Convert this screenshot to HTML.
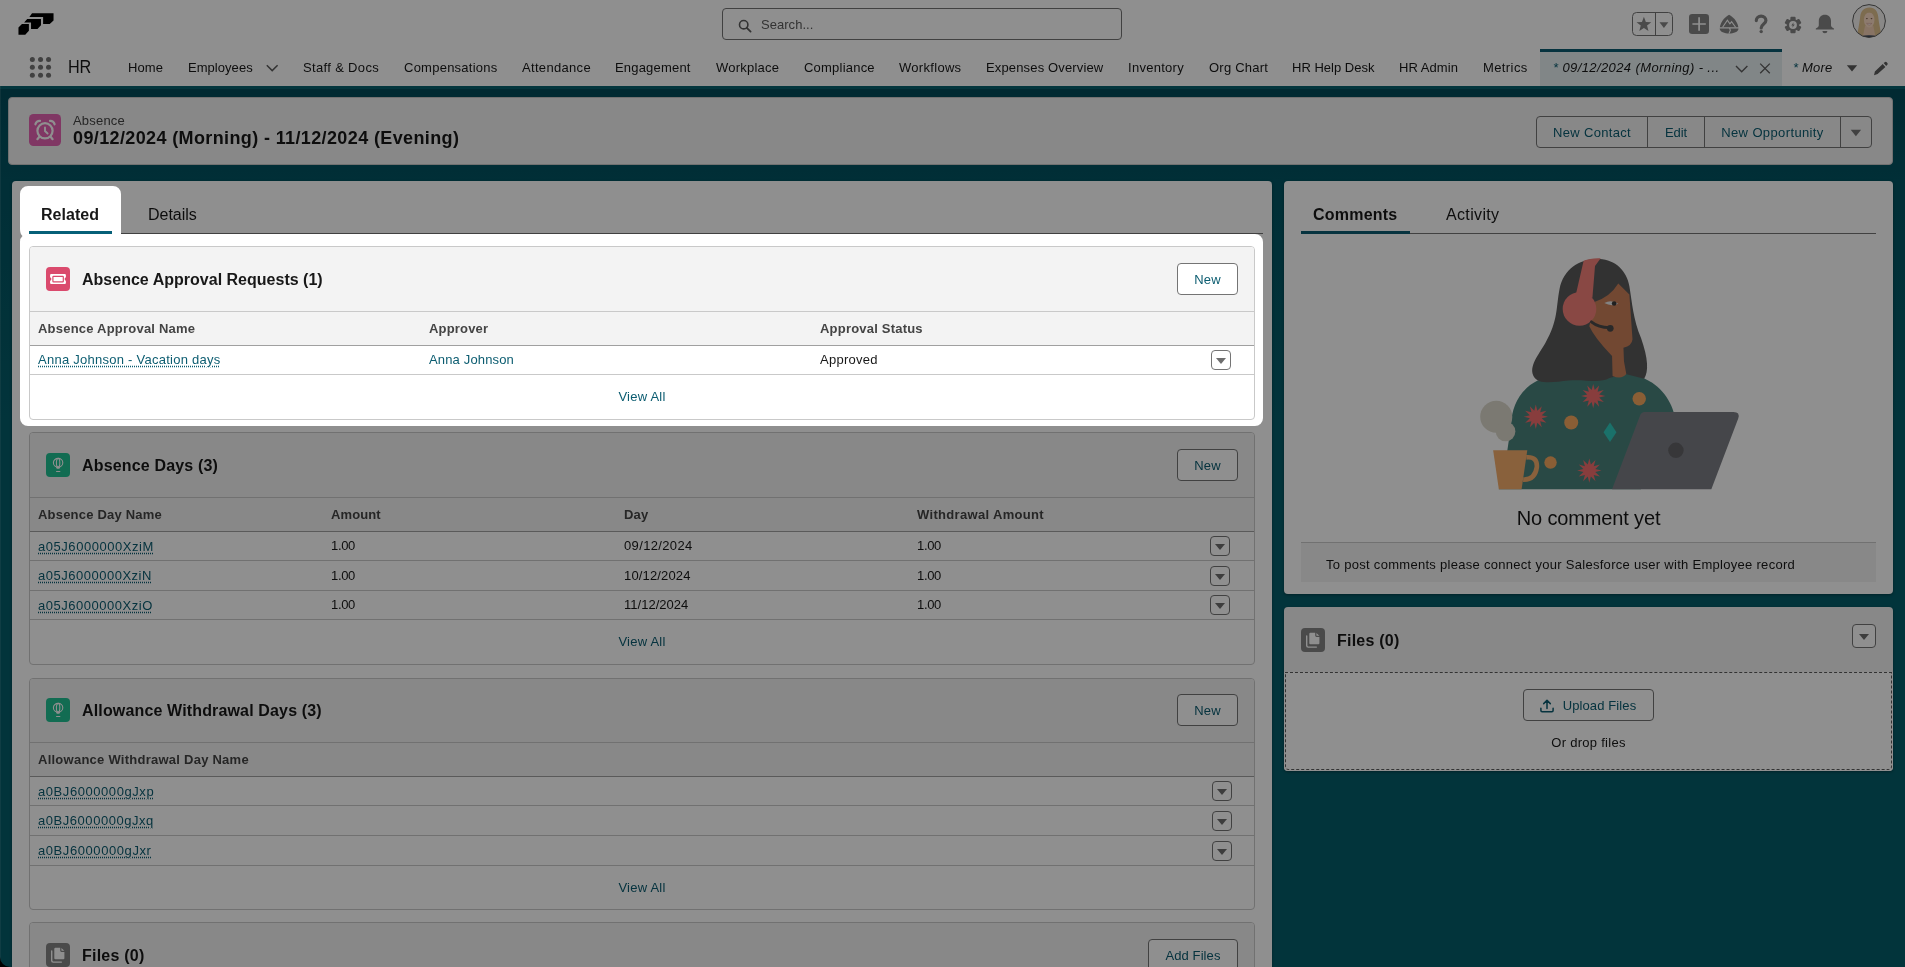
<!DOCTYPE html>
<html lang="en">
<head>
<meta charset="utf-8">
<title>09/12/2024 (Morning) - 11/12/2024 (Evening) | Absence | Salesforce</title>
<style>
*{box-sizing:border-box;margin:0;padding:0}
html,body{width:1905px;height:967px;overflow:hidden}
body{position:relative;background:linear-gradient(to bottom,#024b59 86px,#025462 180px,#055d6a 420px);font-family:"Liberation Sans",Arial,sans-serif;font-size:13px;color:#181818}
.a{position:absolute}
.t{position:absolute;white-space:nowrap;line-height:16px}
.lk{color:#0b5c70}
.b{font-weight:bold}
/* global header */
#gh{left:0;top:0;width:1905px;height:48px;background:#fff}
#nav{left:0;top:48px;width:1905px;height:38px;background:#fff}
.nv{top:12px;font-size:13px;color:#181818}
/* cards */
.card{background:#fff;border-radius:4px;box-shadow:0 1px 3px rgba(0,0,0,.35)}
.rl{background:#fff;border:1px solid #c9c9c9;border-radius:4px;overflow:hidden}
.rlh{left:0;top:0;width:100%;height:64px;background:#f3f3f3;border-bottom:1px solid #c9c9c9}
.rlt{left:52px;font-size:16px;font-weight:bold;line-height:20px;color:#181818}
.ico{border-radius:4px;width:24px;height:24px}
.btn{position:absolute;background:#fff;border:1px solid #747474;border-radius:4px;color:#0b5c70;font-size:13px;line-height:32px;text-align:center;height:32px;white-space:nowrap}
.th{left:0;width:100%;height:34px;background:#f3f3f3;border-bottom:1px solid #a0a0a0;top:64px}
.thc{top:9px;font-weight:bold;color:#444;font-size:13px}
.row{left:0;width:100%;border-bottom:1px solid #c9c9c9;background:#fff}
.ul{text-decoration:underline dotted;text-underline-offset:2px}
.dd{position:absolute;width:20px;height:20px;border:1px solid #747474;border-radius:4px;background:#fff}
.dd:after{content:"";position:absolute;left:4px;top:7px;border-left:5px solid transparent;border-right:5px solid transparent;border-top:6px solid #6e6e6e}
.dd24{width:24px;height:24px}
.dd24:after{left:6px;top:9px}
.va{left:0;width:100%;text-align:center;color:#0b5c70;font-size:13px;line-height:16px}
</style>
</head>
<body>
<div id="wrap" style="position:absolute;left:0;top:0;width:1905px;height:967px;will-change:transform">

<!-- ===== GLOBAL HEADER ===== -->
<div id="gh" class="a">
  <svg class="a" style="left:14px;top:8px" width="44" height="32" viewBox="0 0 1330 967">
    <path fill="#000" d="M545 160H1195V375L1080 480H880V270H465ZM400 335H815V525L710 635H515V440H305ZM240 485H450V690L340 805H135V590Z"/>
  </svg>
  <div class="a" style="left:722px;top:8px;width:400px;height:32px;border:1px solid #747474;border-radius:4px;background:#fff"></div>
  <svg class="a" style="left:738px;top:19px" width="14" height="14" viewBox="0 0 14 14"><circle cx="5.7" cy="5.7" r="4.2" fill="none" stroke="#5c5c5c" stroke-width="1.6"/><path d="M8.8 8.8 L12.6 12.6" stroke="#5c5c5c" stroke-width="1.8" stroke-linecap="round"/></svg>
  <div class="t" style="left:761px;top:17px;color:#5c5c5c;font-size:13px;letter-spacing:0.041px">Search...</div>
  <!-- header actions -->
  <svg class="a" style="left:1620px;top:0" width="285" height="48" viewBox="1620 0 285 48">
    <rect x="1632.5" y="12.5" width="40" height="23" rx="4" fill="#fff" stroke="#747474"/>
    <path d="M1655.5 12.5V35.5" stroke="#747474"/>
    <polygon fill="#848484" points="1643.90,16.80 1645.84,21.93 1651.32,22.19 1647.04,25.62 1648.48,30.91 1643.90,27.90 1639.32,30.91 1640.76,25.62 1636.48,22.19 1641.96,21.93"/>
    <polygon fill="#848484" points="1659.5,22.3 1668.3,22.3 1663.9,27.9"/>
    <rect x="1689" y="14" width="20" height="20" rx="3.2" fill="#848484"/>
    <path d="M1692.4 24H1705.8M1699.1 17.3V30.7" stroke="#fff" stroke-width="1.7"/>
    <path fill="#848484" d="M1729.1 14.8C1734.5 17.5 1738.6 24 1738.5 28.8C1738.4 32 1733.5 33.5 1729.1 33.5C1724.7 33.5 1719.8 32 1719.7 28.8C1719.6 24 1723.7 17.5 1729.1 14.8Z"/>
    <path d="M1722.6 27.2L1727.4 20.2L1729.9 23.8L1731.6 21.6L1735.6 27.2" fill="none" stroke="#fff" stroke-width="1.1"/>
    <path d="M1719 27.9H1739.2M1729.6 28L1730.3 30.4L1728.9 33.6" fill="none" stroke="#fff" stroke-width="1.1"/>
    <path d="M1756.3 20.6C1756.3 17.8 1758.4 16.2 1761.1 16.2C1763.9 16.2 1765.9 17.9 1765.9 20.4C1765.9 24 1761.2 23.9 1761.2 28" fill="none" stroke="#848484" stroke-width="3.2" stroke-linecap="round"/>
    <circle cx="1761.2" cy="31.6" r="1.7" fill="#848484"/>
    <polygon fill="#848484" stroke="#848484" stroke-width="1.7" stroke-linejoin="round" points="1791.10,20.16 1791.28,17.49 1794.72,17.49 1794.90,20.16 1796.24,20.93 1798.64,19.76 1800.36,22.73 1798.14,24.23 1798.14,25.77 1800.36,27.27 1798.64,30.24 1796.24,29.07 1794.90,29.84 1794.72,32.51 1791.28,32.51 1791.10,29.84 1789.76,29.07 1787.36,30.24 1785.64,27.27 1787.86,25.77 1787.86,24.23 1785.64,22.73 1787.36,19.76 1789.76,20.93"/>
    <circle cx="1793" cy="25" r="3.9" fill="#fff"/>
    <path fill="#848484" d="M1793.6 22.3L1791.3 25.4H1792.8L1792.3 27.8L1794.8 24.5H1793.2Z"/>
    <path fill="#848484" d="M1824.9 14.8C1828.6 14.8 1831 17.5 1831 21V25.3C1831 26.8 1832.2 27.6 1833.6 28.2C1834.4 28.6 1834.2 29.6 1833.4 29.6H1816.4C1815.6 29.6 1815.4 28.6 1816.2 28.2C1817.6 27.6 1818.8 26.8 1818.8 25.3V21C1818.8 17.5 1821.2 14.8 1824.9 14.8Z"/>
    <path fill="#848484" d="M1822.4 31H1827.4A2.5 2.3 0 0 1 1822.4 31Z"/>
    <!-- avatar -->
    <clipPath id="avc"><circle cx="1869" cy="21" r="16.2"/></clipPath>
    <g clip-path="url(#avc)">
      <rect x="1852" y="4" width="34" height="34" fill="#f4f3f1"/>
      <path fill="#dfc08e" d="M1869.3 7.6C1874.6 7.4 1877.6 11.2 1878.2 16.6C1878.9 23.5 1880.4 29 1881.8 38H1856.8C1858.2 29 1859.4 23.5 1860.2 16.6C1860.8 11.2 1864 7.7 1869.3 7.6Z"/>
      <path fill="#f3cfb4" d="M1865 26H1873.4L1875.6 38H1862.6Z"/>
      <ellipse cx="1869.2" cy="19.8" rx="5.3" ry="7.6" fill="#fbdcc4"/>
      <path fill="#dfc08e" d="M1863.2 17C1863.6 12 1866 10.2 1869.4 10.2C1872.6 10.2 1875 12.2 1875.3 17C1873.6 14 1871.8 12.6 1869.2 12.6C1866.6 12.6 1865 14 1863.2 17Z"/>
      <ellipse cx="1866.9" cy="18.6" rx="0.9" ry="0.6" fill="#7a5a48"/><ellipse cx="1871.5" cy="18.6" rx="0.9" ry="0.6" fill="#7a5a48"/>
      <path d="M1866.6 23.4Q1869.2 26.6 1871.8 23.4Z" fill="#fff" stroke="#c98a7a" stroke-width="0.5"/>
      <path fill="#3d4a5c" d="M1860 36.5Q1869 34 1878 36.5V38H1860Z"/>
    </g>
    <circle cx="1869" cy="21" r="16.4" fill="none" stroke="#5c5c5c" stroke-width="1"/>
  </svg>
</div>

<!-- ===== NAV BAR ===== -->
<div id="nav" class="a">
  <svg class="a" style="left:28px;top:7px" width="26" height="26" viewBox="28 55 26 26"><g fill="#747474"><circle cx="32.35" cy="59.40" r="2.5"/><circle cx="40.55" cy="59.40" r="2.5"/><circle cx="48.55" cy="59.40" r="2.5"/><circle cx="32.35" cy="67.30" r="2.5"/><circle cx="40.55" cy="67.30" r="2.5"/><circle cx="48.55" cy="67.30" r="2.5"/><circle cx="32.35" cy="75.20" r="2.5"/><circle cx="40.55" cy="75.20" r="2.5"/><circle cx="48.55" cy="75.20" r="2.5"/></g></svg>
  <div class="t" style="left:68px;top:8px;font-size:18px;line-height:22px;color:#181818;transform:scaleX(.9);transform-origin:0 50%;letter-spacing:-0.1px">HR</div>
  <div class="t nv" style="left:128px;letter-spacing:0.078px">Home</div>
  <div class="t nv" style="left:188px;letter-spacing:0.043px">Employees</div>
  <div class="t nv" style="left:303px;letter-spacing:0.34px">Staff &amp; Docs</div>
  <div class="t nv" style="left:404px;letter-spacing:0.244px">Compensations</div>
  <div class="t nv" style="left:522px;letter-spacing:0.322px">Attendance</div>
  <div class="t nv" style="left:615px;letter-spacing:0.187px">Engagement</div>
  <div class="t nv" style="left:716px;letter-spacing:0.235px">Workplace</div>
  <div class="t nv" style="left:804px;letter-spacing:0.214px">Compliance</div>
  <div class="t nv" style="left:899px;letter-spacing:0.298px">Workflows</div>
  <div class="t nv" style="left:986px;letter-spacing:0.148px">Expenses Overview</div>
  <div class="t nv" style="left:1128px;letter-spacing:0.28px">Inventory</div>
  <div class="t nv" style="left:1209px;letter-spacing:0.236px">Org Chart</div>
  <div class="t nv" style="left:1292px;letter-spacing:0.003px">HR Help Desk</div>
  <div class="t nv" style="left:1399px;letter-spacing:0.059px">HR Admin</div>
  <div class="t nv" style="left:1483px;letter-spacing:0.401px">Metrics</div>
  <div class="a" style="left:1540px;top:1px;width:242px;height:37px;background:#e6eff1;border-top:3px solid #0b5c70"></div>
  <svg class="a" style="left:0;top:0" width="1905" height="38" viewBox="0 48 1905 38">
    <path d="M266.8 65.2L272.2 70.6L277.6 65.2" fill="none" stroke="#5c5c5c" stroke-width="1.5"/>
    <path d="M1736 66L1741.7 71.7L1747.4 66" fill="none" stroke="#5c5c5c" stroke-width="1.4"/>
    <path d="M1760.2 63.6L1769.8 73.2M1769.8 63.6L1760.2 73.2" fill="none" stroke="#5c5c5c" stroke-width="1.3"/>
    <polygon fill="#5c5c5c" points="1846.8,65.2 1857.2,65.2 1852,71.6"/>
    <path fill="#5c5c5c" d="M1883.6 63.1L1885.2 61.9Q1886 61.5 1886.7 62.2L1887.5 63.2Q1888 63.9 1887.5 64.6L1886.2 66ZM1882.7 64L1885.4 66.9L1877.6 74.1L1874 75.2L1874.9 71.5Z"/>
  </svg>
  <div class="t nv" style="left:1553px;font-style:italic;letter-spacing:0.394px"><span style="color:#0b5c70">*</span> 09/12/2024 (Morning) - ...</div>
  <div class="t nv" style="left:1793px;font-style:italic;letter-spacing:0.184px"><span style="color:#0b5c70">*</span> More</div>
</div>

<div class="a" style="left:0;top:86px;width:1905px;height:3px;background:#07606e"></div>
<div class="a" style="left:0;top:86px;width:1px;height:881px;background:rgba(255,255,255,.1)"></div>
<!-- ===== RECORD HEADER ===== -->
<div class="a" style="left:8px;top:97px;width:1885px;height:68px;background:#f3f3f3;border-radius:4px;border:1px solid #c9c9c9">
  <svg class="a" style="left:20px;top:16px" width="32" height="32" viewBox="0 0 32 32"><rect width="32" height="32" rx="4.5" fill="#e462b2"/>
    <g fill="none" stroke="#fff" stroke-width="2.2" stroke-linecap="round"><circle cx="16" cy="16.8" r="7.6"/><path d="M6.4 10.3A4.2 4.2 0 0 1 11 6.9M21 6.9A4.2 4.2 0 0 1 25.6 10.3M10.2 23L8.4 25.2M21.8 23L23.6 25.2"/><path d="M16 13.4V17L18.6 19.5" stroke-width="1.9"/></g></svg>
  <div class="t" style="left:64px;top:15px;font-size:13px;color:#444;letter-spacing:0.187px">Absence</div>
  <div class="t b" style="left:64px;top:29px;font-size:18px;line-height:22px;color:#181818;letter-spacing:0.375px">09/12/2024 (Morning) - 11/12/2024 (Evening)</div>
  <div class="btn" style="left:1527px;top:18px;background:transparent;width:112px;border-radius:4px 0 0 4px;letter-spacing:0.325px">New Contact</div>
  <div class="btn" style="left:1638px;top:18px;background:transparent;width:58px;border-radius:0;letter-spacing:-0.052px">Edit</div>
  <div class="btn" style="left:1695px;top:18px;background:transparent;width:137px;border-radius:0;letter-spacing:0.378px">New Opportunity</div>
  <div class="btn" style="left:1831px;top:18px;background:transparent;width:32px;border-radius:0 4px 4px 0"></div>
  <svg class="a" style="left:1841px;top:31px" width="12" height="8" viewBox="0 0 12 8"><polygon fill="#747474" points="0.7,0.8 11.1,0.8 5.9,7.2"/></svg>
</div>

<!-- ===== LEFT MAIN CARD ===== -->
<div id="main" class="a card" style="left:12px;top:181px;width:1260px;height:800px;border-radius:4px 4px 0 0">
  <div class="a" style="left:9px;top:52px;width:1242px;height:1px;background:#747474"></div>
  <div class="a" style="left:8px;top:52px;width:101px;height:1px;background:#fff"></div>
  <div class="t b" style="left:29px;top:24px;font-size:16px;line-height:20px;color:#181818;letter-spacing:0.029px">Related</div>
  <div class="a" style="left:17px;top:50px;width:83px;height:3px;background:#066078"></div>
  <div class="t" style="left:136px;top:24px;font-size:16px;line-height:20px;color:#181818;letter-spacing:-0.029px">Details</div>

  <!-- card 1 : Absence Approval Requests -->
  <div class="a rl" style="left:17px;top:65px;width:1226px;height:174px">
    <div class="a rlh" style="height:65px">
      <svg class="a" style="left:16px;top:20px" width="24" height="24" viewBox="0 0 24 24"><rect width="24" height="24" rx="4" fill="#da4a6d"/>
        <path fill="#fff" d="M5.2 7H18.8Q19.9 7 19.9 8.1V10.2Q18.6 10.8 18.6 12Q18.6 13.3 19.9 13.9V16Q19.9 17.1 18.8 17.1H5.2Q4.1 17.1 4.1 16V13.9Q5.4 13.3 5.4 12Q5.4 10.8 4.1 10.2V8.1Q4.1 7 5.2 7Z"/>
        <rect x="6.9" y="9.3" width="10.4" height="5.5" rx="0.6" fill="none" stroke="#da4a6d" stroke-width="1.2"/></svg>
      <div class="t rlt" style="top:23px;letter-spacing:0.012px">Absence Approval Requests (1)</div>
      <div class="btn" style="left:1147px;top:16px;width:61px;letter-spacing:0.161px">New</div>
    </div>
    <div class="a th" style="top:65px;height:34px">
      <div class="t thc" style="left:8px;letter-spacing:0.22px">Absence Approval Name</div>
      <div class="t thc" style="left:399px;letter-spacing:0.175px">Approver</div>
      <div class="t thc" style="left:790px;letter-spacing:0.207px">Approval Status</div>
    </div>
    <div class="a row" style="top:99px;height:29px">
      <div class="t lk ul" style="left:8px;top:6px;letter-spacing:0.258px">Anna Johnson - Vacation days</div>
      <div class="t lk" style="left:399px;top:6px;letter-spacing:0.156px">Anna Johnson</div>
      <div class="t" style="left:790px;top:6px;letter-spacing:0.268px">Approved</div>
      <div class="dd" style="left:1181px;top:4px"></div>
    </div>
    <div class="t va" style="top:142px;letter-spacing:0.238px">View All</div>
  </div>

  <!-- card 2 : Absence Days -->
  <div class="a rl" style="left:17px;top:251px;width:1226px;height:233px">
    <div class="a rlh" style="height:65px">
      <svg class="a" style="left:16px;top:20px" width="24" height="24" viewBox="0 0 24 24"><rect width="24" height="24" rx="4" fill="#20c092"/>
        <g fill="none" stroke="#fff" stroke-width="1.1"><ellipse cx="12.1" cy="9.7" rx="4.7" ry="4.3"/><ellipse cx="12.1" cy="9.7" rx="1.7" ry="4.3"/></g>
        <path fill="#fff" d="M9.9 14.1H14.3L13.4 15.7H10.8ZM10.5 17.9H13.9Q14.4 17.9 14.4 18.5Q14.4 19 13.9 19H10.5Q10 19 10 18.5Q10 17.9 10.5 17.9Z"/></svg>
      <div class="t rlt" style="top:23px;letter-spacing:0.163px">Absence Days (3)</div>
      <div class="btn" style="left:1147px;top:16px;width:61px;letter-spacing:0.161px">New</div>
    </div>
    <div class="a th" style="top:65px;height:34px">
      <div class="t thc" style="left:8px;letter-spacing:0.202px">Absence Day Name</div>
      <div class="t thc" style="left:301px;letter-spacing:0.115px">Amount</div>
      <div class="t thc" style="left:594px;letter-spacing:0.147px">Day</div>
      <div class="t thc" style="left:887px;letter-spacing:0.326px">Withdrawal Amount</div>
    </div>
    <div class="a row" style="top:99px;height:29px">
      <div class="t lk ul" style="left:8px;top:7px;letter-spacing:0.546px">a05J6000000XziM</div>
      <div class="t" style="left:301px;top:6px;letter-spacing:-0.353px">1.00</div>
      <div class="t" style="left:594px;top:6px;letter-spacing:0.352px">09/12/2024</div>
      <div class="t" style="left:887px;top:6px;letter-spacing:-0.353px">1.00</div>
      <div class="dd" style="left:1180px;top:4px"></div>
    </div>
    <div class="a row" style="top:128px;height:30px">
      <div class="t lk ul" style="left:8px;top:7px;letter-spacing:0.51px">a05J6000000XziN</div>
      <div class="t" style="left:301px;top:7px;letter-spacing:-0.353px">1.00</div>
      <div class="t" style="left:594px;top:7px;letter-spacing:0.152px">10/12/2024</div>
      <div class="t" style="left:887px;top:7px;letter-spacing:-0.353px">1.00</div>
      <div class="dd" style="left:1180px;top:5px"></div>
    </div>
    <div class="a row" style="top:158px;height:29px">
      <div class="t lk ul" style="left:8px;top:7px;letter-spacing:0.528px">a05J6000000XziO</div>
      <div class="t" style="left:301px;top:6px;letter-spacing:-0.353px">1.00</div>
      <div class="t" style="left:594px;top:6px;letter-spacing:0.019px">11/12/2024</div>
      <div class="t" style="left:887px;top:6px;letter-spacing:-0.353px">1.00</div>
      <div class="dd" style="left:1180px;top:4px"></div>
    </div>
    <div class="t va" style="top:201px;letter-spacing:0.238px">View All</div>
  </div>

  <!-- card 3 : Allowance Withdrawal Days -->
  <div class="a rl" style="left:17px;top:497px;width:1226px;height:232px">
    <div class="a rlh" style="height:64px">
      <svg class="a" style="left:16px;top:19px" width="24" height="24" viewBox="0 0 24 24"><rect width="24" height="24" rx="4" fill="#20c092"/>
        <g fill="none" stroke="#fff" stroke-width="1.1"><ellipse cx="12.1" cy="9.7" rx="4.7" ry="4.3"/><ellipse cx="12.1" cy="9.7" rx="1.7" ry="4.3"/></g>
        <path fill="#fff" d="M9.9 14.1H14.3L13.4 15.7H10.8ZM10.5 17.9H13.9Q14.4 17.9 14.4 18.5Q14.4 19 13.9 19H10.5Q10 19 10 18.5Q10 17.9 10.5 17.9Z"/></svg>
      <div class="t rlt" style="top:22px;letter-spacing:0.149px">Allowance Withdrawal Days (3)</div>
      <div class="btn" style="left:1147px;top:15px;width:61px;letter-spacing:0.161px">New</div>
    </div>
    <div class="a th" style="top:64px;height:34px">
      <div class="t thc" style="left:8px;letter-spacing:0.251px">Allowance Withdrawal Day Name</div>
    </div>
    <div class="a row" style="top:98px;height:29px">
      <div class="t lk ul" style="left:8px;top:7px;letter-spacing:0.566px">a0BJ6000000gJxp</div>
      <div class="dd" style="left:1182px;top:4px"></div>
    </div>
    <div class="a row" style="top:127px;height:30px">
      <div class="t lk ul" style="left:8px;top:7px;letter-spacing:0.546px">a0BJ6000000gJxq</div>
      <div class="dd" style="left:1182px;top:5px"></div>
    </div>
    <div class="a row" style="top:157px;height:30px">
      <div class="t lk ul" style="left:8px;top:7px;letter-spacing:0.579px">a0BJ6000000gJxr</div>
      <div class="dd" style="left:1182px;top:5px"></div>
    </div>
    <div class="t va" style="top:201px;letter-spacing:0.238px">View All</div>
  </div>

  <!-- card 4 : Files -->
  <div class="a rl" style="left:17px;top:741px;width:1226px;height:100px">
    <div class="a rlh" style="height:78px">
      <svg class="a" style="left:16px;top:20px" width="24" height="24" viewBox="0 0 24 24"><rect width="24" height="24" rx="4" fill="#858585"/>
        <path fill="#fff" d="M9.4 4.8H14.2V7.6Q14.2 8.9 15.5 8.9H18.4V15.2Q18.4 16.3 17.3 16.3H9.4Q8.3 16.3 8.3 15.2V5.9Q8.3 4.8 9.4 4.8ZM15.4 4.9L18.3 7.8H15.9Q15.4 7.8 15.4 7.3Z"/>
        <path fill="none" stroke="#fff" stroke-width="1.4" stroke-linecap="round" d="M5.7 8V17.6Q5.7 19.1 7.2 19.1H15.4"/></svg>
      <div class="t rlt" style="top:23px;letter-spacing:0.226px">Files (0)</div>
      <div class="btn" style="left:1118px;top:16px;width:90px;letter-spacing:0.1px">Add Files</div>
    </div>
  </div>
</div>

<!-- ===== RIGHT COLUMN ===== -->
<div class="a card" style="left:1284px;top:181px;width:609px;height:413px">
  <div class="a" style="left:17px;top:52px;width:575px;height:1px;background:#747474"></div>
  <div class="t b" style="left:29px;top:24px;font-size:16px;line-height:20px;letter-spacing:0.227px">Comments</div>
  <div class="a" style="left:17px;top:50px;width:109px;height:3px;background:#0b5c70"></div>
  <div class="t" style="left:162px;top:24px;font-size:16px;line-height:20px;letter-spacing:0.341px">Activity</div>
  <svg class="a" style="left:176px;top:69px" width="300" height="250" viewBox="0 0 1160 967">
    <!-- steam -->
    <!-- sweater -->
    <path fill="#4a837c" d="M300 505C232 540 200 600 197 680L183 775L150 925H700L830 640C815 570 760 512 700 492L645 470L620 470L588 470L540 480C480 480 400 480 300 505Z"/>
    <circle cx="140" cy="645" r="62" fill="#dcd8cb"/><circle cx="176" cy="702" r="38" fill="#dcd8cb"/>
    <!-- hair -->
    <path fill="#5a5a5a" d="M540 35C470 30 400 70 385 150C370 230 380 270 330 360C300 410 268 450 283 485C298 522 360 512 420 505C480 498 540 518 578 495L640 480L712 498C730 470 728 420 700 340C670 270 665 200 655 140C645 80 600 38 540 35Z"/>
    <!-- face + neck -->
    <path fill="#cc805a" d="M612 130L655 172L667 345Q665 370 632 378L634 430L643 480Q625 502 590 487L588 410Q520 340 500 295L522 200Q580 182 612 130Z"/>
    <!-- eye -->
    <path fill="#e9e9e9" d="M558 205Q585 190 612 208Q585 220 558 205Z"/><circle cx="596" cy="207" r="9" fill="#3a3a3a"/>
    <!-- headset -->
    <path fill="#f4807a" d="M478 42Q505 30 544 32L522 62L512 185H445Z"/>
    <circle cx="462" cy="228" r="65" fill="#f4807a"/>
    <path d="M508 278Q535 300 578 300" fill="none" stroke="#4a4a4a" stroke-width="11" stroke-linecap="round"/><circle cx="581" cy="303" r="13" fill="#4a4a4a"/>
    <!-- decorations -->
    <polygon fill="#f26d6d" points="515,518 521,542 538,524 532,548 556,542 538,559 562,565 538,571 556,588 532,582 538,606 521,588 515,612 509,588 492,606 498,582 474,588 492,571 468,565 492,559 474,542 498,548 492,524 509,542"/>
    <polygon fill="#f26d6d" points="293,598 299,622 316,604 310,628 334,622 316,639 340,645 316,651 334,668 310,662 316,686 299,668 293,692 287,668 270,686 276,662 252,668 270,651 246,645 270,639 252,622 276,628 270,604 287,622"/>
    <polygon fill="#f26d6d" points="500,806 506,830 524,812 517,836 541,830 523,847 547,853 523,859 541,876 517,870 524,894 506,876 500,900 494,876 476,894 483,870 459,876 477,859 453,853 477,847 459,830 483,836 476,812 494,830"/>
    <circle cx="693" cy="575" r="26" fill="#f6a85f"/><circle cx="430" cy="667" r="27" fill="#f6a85f"/><circle cx="350" cy="822" r="24" fill="#f6a85f"/>
    <polygon fill="#2fc9bd" points="580,667 605,705 580,743 555,705"/>
    <!-- laptop -->
    <path fill="#7c7e85" d="M714 627H1058Q1084 627 1076 652L972 925H588L696 641Q701 627 714 627Z"/>
    <circle cx="835" cy="775" r="30" fill="#636367"/>
    <!-- cup -->
    <path fill="#f4ad6c" d="M128 775H260L238 925H150Z"/>
    <path d="M256 802Q300 798 297 840Q290 890 244 888" fill="none" stroke="#f4ad6c" stroke-width="18"/>
  </svg>
  <div class="t" style="left:0;width:609px;text-align:center;top:324px;font-size:20px;line-height:26px;letter-spacing:-0.144px">No comment yet</div>
  <div class="a" style="left:17px;top:361px;width:575px;height:40px;background:#f3f3f3;border-top:1px solid #c9c9c9"></div>
  <div class="t" style="left:42px;top:376px;font-size:13px;letter-spacing:0.289px">To post comments please connect your Salesforce user with Employee record</div>
</div>

<div class="a card" style="left:1284px;top:607px;width:609px;height:164px;background:#f3f3f3">
  <svg class="a" style="left:17px;top:21px" width="24" height="24" viewBox="0 0 24 24"><rect width="24" height="24" rx="4" fill="#858585"/>
        <path fill="#fff" d="M9.4 4.8H14.2V7.6Q14.2 8.9 15.5 8.9H18.4V15.2Q18.4 16.3 17.3 16.3H9.4Q8.3 16.3 8.3 15.2V5.9Q8.3 4.8 9.4 4.8ZM15.4 4.9L18.3 7.8H15.9Q15.4 7.8 15.4 7.3Z"/>
        <path fill="none" stroke="#fff" stroke-width="1.4" stroke-linecap="round" d="M5.7 8V17.6Q5.7 19.1 7.2 19.1H15.4"/></svg>
  <div class="t b" style="left:53px;top:24px;font-size:16px;line-height:20px;letter-spacing:0.226px">Files (0)</div>
  <div class="dd dd24" style="left:568px;top:17px"></div>
  <div class="a" style="left:0;top:65px;width:609px;height:99px;background:#fff;border-radius:0 0 4px 4px"></div>
  <div class="a" style="left:1px;top:65px;width:607px;height:98px;border:1px dashed #5c5c5c;border-radius:0 0 4px 4px"></div>
  <svg class="a" style="left:255px;top:91px;z-index:2" width="16" height="16" viewBox="0 0 16 16"><path fill="none" stroke="#0b5c70" stroke-width="1.5" stroke-linecap="round" stroke-linejoin="round" d="M8 10.6V2.6M4.7 5.6L8 2.3L11.3 5.6M1.9 10.2V12.6Q1.9 13.8 3.1 13.8H12.9Q14.1 13.8 14.1 12.6V10.2"/></svg>
  <div class="btn" style="left:239px;top:82px;width:131px;padding-left:22px;letter-spacing:0.12px">Upload Files</div>
  <div class="t" style="left:0;width:609px;text-align:center;top:128px;font-size:13px;letter-spacing:0.284px">Or drop files</div>
</div>

</div>
<!-- ===== OVERLAY ===== -->
<svg class="a" style="left:0;top:0" width="1905" height="967" viewBox="0 0 1905 967">
  <path fill="#000" fill-opacity="0.44" fill-rule="evenodd"
    d="M0 0H1905V967H0Z
       M28 186H113A8 8 0 0 1 121 194V234H1255A8 8 0 0 1 1263 242V418A8 8 0 0 1 1255 426H28A8 8 0 0 1 20 418V242Q20 238 22.5 236Q20 234 20 229V194A8 8 0 0 1 28 186Z"/>
  <path d="M0 957A10 10 0 0 0 10 967H0Z" fill="#000"/>
</svg>
</body>
</html>
